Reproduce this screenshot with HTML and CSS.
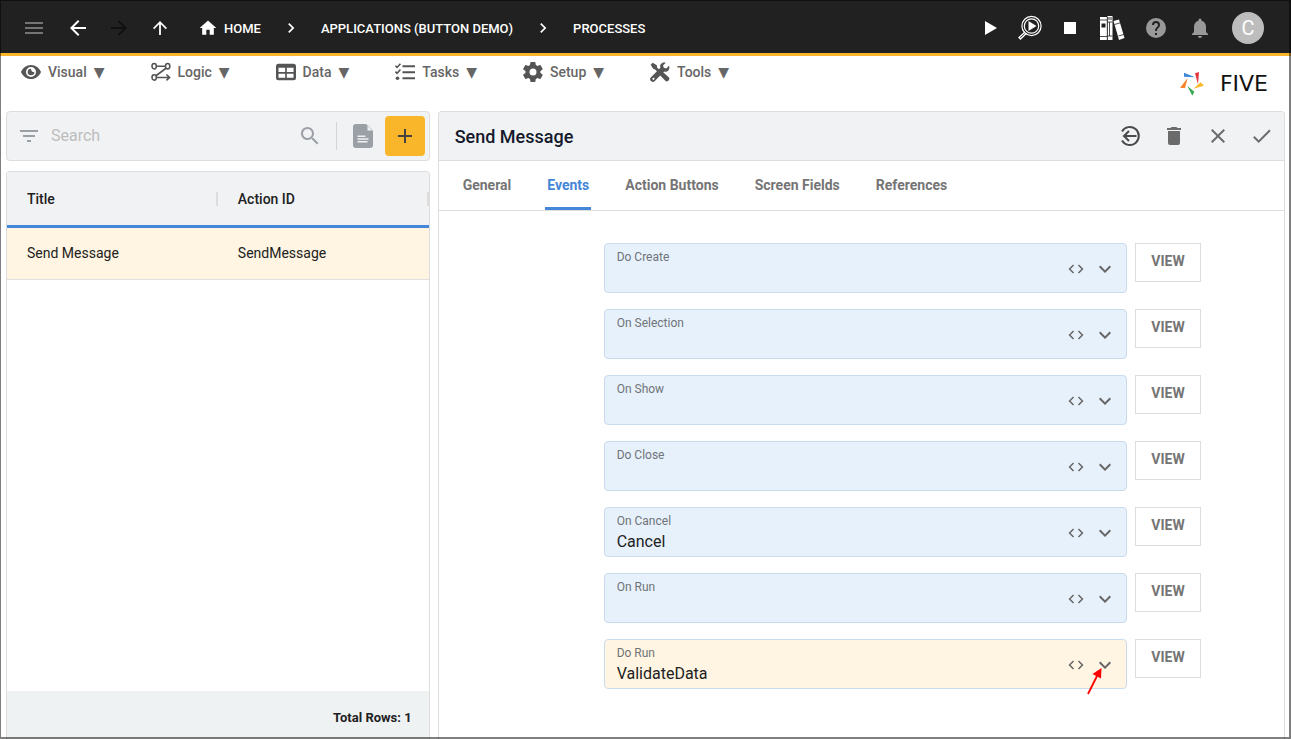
FILE: index.html
```html
<!DOCTYPE html>
<html lang="en">
  <head>
    <meta charset="UTF-8" />
    <meta name="viewport" content="width=device-width, initial-scale=1.0" />
    <title>Five - Processes</title>
    <link rel="stylesheet" href="styles.css" />
  </head>
  <body>
    <!-- shared icons -->
    <svg class="sprite" aria-hidden="true">
      <symbol id="chevron-right" viewBox="0 0 24 24"><path d="M8.6 16.6 13.2 12 8.6 7.4 10 6l6 6-6 6z" /></symbol>
      <symbol id="chevron-down" viewBox="0 0 24 24"><path d="M7.4 8.6 12 13.2l4.6-4.6L18 10l-6 6-6-6z" /></symbol>
      <symbol id="code" viewBox="0 0 24 24"><path d="M9.4 16.6 4.8 12l4.6-4.6L8 6l-6 6 6 6zm5.2 0 4.6-4.6-4.6-4.6L16 6l6 6-6 6z" /></symbol>
    </svg>

    <header class="topbar">
      <button class="icon-btn menu-toggle" aria-label="Menu">
        <svg viewBox="0 0 24 24"><path d="M3 18h18v-2H3zm0-5h18v-2H3zm0-7v2h18V6z" /></svg>
      </button>
      <div class="history">
        <button class="icon-btn" aria-label="Back">
          <svg viewBox="0 0 24 24"><path d="M20 11H7.8l5.6-5.6L12 4l-8 8 8 8 1.4-1.4L7.8 13H20z" /></svg>
        </button>
        <button class="icon-btn disabled" aria-label="Forward" disabled>
          <svg viewBox="0 0 24 24"><path d="m12 4-1.4 1.4 5.6 5.6H4v2h12.2l-5.6 5.6L12 20l8-8z" /></svg>
        </button>
        <button class="icon-btn" aria-label="Up">
          <svg viewBox="0 0 24 24"><path d="m5 12 1.2 1.2 4.9-4.9V19h1.8V8.300l4.900 4.900L19 12l-7-7z" /></svg>
        </button>
      </div>
      <nav class="breadcrumbs" aria-label="Breadcrumb">
        <a href="#" class="home">
          <svg viewBox="0 0 24 24" class="home-icon"><path d="M10 20v-6h4v6h5v-8h3L12 3 2 12h3v8z" /></svg>
          HOME
        </a>
        <svg class="crumb-sep"><use href="#chevron-right" /></svg>
        <a href="#">APPLICATIONS (BUTTON DEMO)</a>
        <svg class="crumb-sep"><use href="#chevron-right" /></svg>
        <a href="#">PROCESSES</a>
      </nav>
      <div class="run-tools">
        <button class="icon-btn" aria-label="Run">
          <svg viewBox="0 0 24 24"><path d="M7 5v14l12-7z" /></svg>
        </button>
        <button class="icon-btn" aria-label="Inspect">
          <svg viewBox="0 0 24 24">
            <g fill="none" stroke="currentColor">
              <circle cx="13.500" cy="10" r="9.600" stroke-width="1.200" />
              <circle cx="13.500" cy="10" r="7.200" stroke-width="1.200" />
              <path d="m7 16-6 5.500 1.500 1.500 6-5.800" stroke-width="1.300" />
            </g>
            <path d="M10.500 5v10l8-5z" />
          </svg>
        </button>
        <button class="icon-btn" aria-label="Stop">
          <svg viewBox="0 0 24 24"><path d="M6 6h12v12H6z" /></svg>
        </button>
      </div>
      <div class="user-tools">
        <button class="icon-btn" aria-label="Library">
          <svg viewBox="0 0 24 24">
            <path d="M0 1h7v23H0z" />
            <path d="M7.500 0h5v24h-5z" />
            <path d="m13.500 5 5.500-1.600L24.500 22 19 24z" />
            <path d="M7.500 1h5v3h-5z" fill="#999" />
            <path d="M1.500 7.500h4v4h-4z" fill="#212121" />
            <path d="M0 4h7M0 20.500h7M7.300 1v23M7.500 6h5M7.500 20h5M14.500 8.500l5.500-1.600M18.500 20l5.500-1.600M9.500 6v14" stroke="#212121" stroke-width=".8" />
          </svg>
        </button>
        <button class="icon-btn muted" aria-label="Help">
          <svg viewBox="0 0 24 24"><path d="M12 2a10 10 0 1 0 0 20 10 10 0 0 0 0-20zm1 17h-2v-2h2zm2.100-7.700-.9.900C13.400 12.900 13 13.500 13 15h-2v-.5c0-1.100.4-2.100 1.200-2.800l1.200-1.300c.4-.4.6-.9.6-1.400a2 2 0 0 0-4 0H8a4 4 0 0 1 8 0c0 .9-.4 1.700-.9 2.300z" /></svg>
        </button>
        <button class="icon-btn muted" aria-label="Notifications">
          <svg viewBox="0 0 24 24"><path d="M12 22a2 2 0 0 0 2-2h-4c0 1.100.9 2 2 2zm6-6v-5c0-3.100-1.600-5.600-4.500-6.300V4a1.500 1.500 0 0 0-3 0v.7C7.600 5.400 6 7.900 6 11v5l-2 2v1h16v-1z" /></svg>
        </button>
      </div>
      <button class="avatar" aria-label="Account">C</button>
    </header>

    <div class="menubar">
      <nav class="menus" aria-label="Main">
        <button class="menu">
          <svg viewBox="0 0 24 24"><path fill-rule="evenodd" d="M12 3.500C6.500 3.500 2 7 0 12c2 5 6.500 8.500 12 8.500S22 17 24 12c-2-5-6.500-8.500-12-8.500zm0 14.500a6 6 0 1 1 0-12 6 6 0 0 1 0 12z" /><path d="M12 8a4 4 0 1 0 4 4c-2 .5-4-1.500-4-4z" /></svg>
          Visual <span class="caret">▼</span>
        </button>
        <button class="menu">
          <svg viewBox="0 0 24 24">
            <g fill="none" stroke="currentColor" stroke-width="1.900">
              <ellipse cx="3.800" cy="5" rx="2.600" ry="3.200" />
              <ellipse cx="20" cy="5" rx="2.600" ry="3.200" />
              <ellipse cx="3.800" cy="18.500" rx="2.600" ry="3.200" />
              <path d="M6.500 5h11M18 7.500 6 16.500M6.500 18.500H22M18.500 15l3.800 3.500-3.800 3.500" />
            </g>
          </svg>
          Logic <span class="caret">▼</span>
        </button>
        <button class="menu">
          <svg viewBox="0 0 24 24"><path fill-rule="evenodd" d="M3 2h18a3 3 0 0 1 3 3v14a3 3 0 0 1-3 3H3a3 3 0 0 1-3-3V5a3 3 0 0 1 3-3zm0 5v5h8V7zm10 0v5h8V7zM3 14v5h8v-5zm10 0v5h8v-5z" /></svg>
          Data <span class="caret">▼</span>
        </button>
        <button class="menu">
          <svg viewBox="0 0 24 24">
            <path d="M9 4h15v2.200H9zm0 7.200h15v2.200H9zm0 7.200h15v2.200H9z" />
            <circle cx="3" cy="19.500" r="2.200" />
            <path d="m.5 4.500 2 2 4-4.500M.5 11.500l2 2 4-4.500" fill="none" stroke="currentColor" stroke-width="1.900" />
          </svg>
          Tasks <span class="caret">▼</span>
        </button>
        <button class="menu">
          <svg viewBox="2 2 20 20"><path d="M19.400 13c0-.3.100-.6.100-1s0-.7-.1-1l2.100-1.600c.2-.2.200-.4.100-.6l-2-3.500c-.1-.2-.4-.3-.6-.2l-2.500 1c-.5-.4-1.100-.7-1.700-1l-.4-2.600c0-.3-.2-.5-.5-.5h-4c-.3 0-.5.2-.5.500L9 5.100c-.6.300-1.200.6-1.700 1l-2.500-1c-.2-.1-.5 0-.6.200l-2 3.500c-.1.200 0 .4.100.6L4.500 11c0 .3-.1.600-.1 1s0 .7.100 1l-2.200 1.600c-.2.200-.2.400-.1.600l2 3.500c.1.200.4.300.6.200l2.500-1c.5.400 1.100.7 1.700 1l.4 2.600c0 .3.200.5.500.5h4c.3 0 .5-.2.500-.5l.4-2.600c.6-.3 1.200-.6 1.700-1l2.500 1c.2.100.5 0 .6-.2l2-3.500c.1-.2.100-.4-.1-.6zM12 15.500a3.500 3.500 0 1 1 0-7 3.500 3.500 0 0 1 0 7z" /></svg>
          Setup <span class="caret">▼</span>
        </button>
        <button class="menu">
          <svg viewBox="0 0 24 24">
            <path d="M.8 3.200 3.200.8l5 3.200.3 2.500 4 4-2.400 2.400-4-4L3.800 8z" />
            <path d="m13.500 13.500 2-1.500 7.300 6.700a3 3 0 0 1-4.100 4.100L12 16z" />
            <path fill-rule="evenodd" d="M22.800 4.500 19.500 7.800 16.500 7l-.8-3L19 .9c-4-1.500-8 2-6.500 6L1.200 18.200a3.200 3.200 0 0 0 4.600 4.600L17 11.500c4 1.300 7.500-2.700 5.800-7zM4.500 19a1.200 1.200 0 1 1-1.500 1.500A1.300 1.300 0 0 1 4.500 19z" />
          </svg>
          Tools <span class="caret">▼</span>
        </button>
      </nav>
      <a href="#" class="logo">
        <svg viewBox="0 0 72 72" aria-hidden="true">
          <path fill="#3d85d9" d="M12 2v12l33 2z" />
          <path fill="#e5343d" d="m45 4 12-4-3 37z" />
          <path fill="#f8842c" d="m0 47 23-29-8 31z" />
          <path fill="#fbb829" d="m40 50 22-19 10 10z" />
          <path fill="#37a853" d="m22 42 21 17-6 12z" />
        </svg>
        FIVE
      </a>
    </div>

    <main class="workspace">
      <section class="list">
        <form class="search">
          <svg viewBox="0 0 24 24" class="filter"><path d="M10 18h4v-2h-4zM3 6v2h18V6zm3 7h12v-2H6z" /></svg>
          <input type="search" class="search-input" placeholder="Search" aria-label="Search" />
          <button type="button" class="icon-btn" aria-label="Search">
            <svg viewBox="0 0 24 24"><path d="M15.500 14h-.8l-.3-.3A6.500 6.500 0 1 0 13.700 14.400l.3.300v.8l5 5 1.500-1.500zm-6 0a4.500 4.500 0 1 1 0-9 4.500 4.500 0 0 1 0 9z" /></svg>
          </button>
          <span class="divider"></span>
          <button type="button" class="icon-btn" aria-label="Report">
            <svg viewBox="0 0 24 24"><path fill-rule="evenodd" d="M5 0h10l7 7v14a3 3 0 0 1-3 3H5a3 3 0 0 1-3-3V3a3 3 0 0 1 3-3zm11.500 1v5.500H22zM6.500 11.500v1.500h8v-1.500zm0 2.800v1.500h11v-1.500zm0 2.800v1.500h10v-1.500z" /></svg>
          </button>
          <button type="button" class="add" aria-label="Add">
            <svg viewBox="0 0 24 24"><path d="M19 13h-6v6h-2v-6H5v-2h6V5h2v6h6z" /></svg>
          </button>
        </form>

        <div class="table-card">
          <table>
            <thead>
              <tr>
                <th><span>Title</span></th>
                <th><span>Action ID</span></th>
              </tr>
            </thead>
            <tbody>
              <tr class="selected">
                <td>Send Message</td>
                <td>SendMessage</td>
              </tr>
            </tbody>
          </table>
          <div class="table-footer">Total Rows: 1</div>
        </div>
      </section>

      <section class="detail">
        <div class="detail-header">
          <h1>Send Message</h1>
          <button class="icon-btn dark" aria-label="Go back">
            <svg viewBox="2 2 20 20"><g fill="none" stroke="currentColor" stroke-width="2"><path d="M4 7.500a9 9 0 1 1 0 9M18.500 12H6.500M11 7l-5 5 5 5" /></g></svg>
          </button>
          <button class="icon-btn" aria-label="Delete">
            <svg viewBox="0 0 24 24"><path d="M6 19a2 2 0 0 0 2 2h8a2 2 0 0 0 2-2V7H6zM19 4h-3.500l-1-1h-5l-1 1H5v2h14z" /></svg>
          </button>
          <button class="icon-btn" aria-label="Cancel">
            <svg viewBox="0 0 24 24"><path d="M19 6.400 17.600 5 12 10.600 6.400 5 5 6.400l5.600 5.600L5 17.600 6.400 19l5.600-5.600 5.600 5.600 1.400-1.400-5.600-5.600z" /></svg>
          </button>
          <button class="icon-btn" aria-label="Save">
            <svg viewBox="0 0 24 24"><path d="M8.700 16.200 4.500 12l-1.400 1.400 5.600 5.600 12-12-1.400-1.400z" /></svg>
          </button>
        </div>

        <div class="tabs" role="tablist">
          <button class="tab" role="tab">General</button>
          <button class="tab active" role="tab" aria-selected="true">Events</button>
          <button class="tab" role="tab">Action Buttons</button>
          <button class="tab" role="tab">Screen Fields</button>
          <button class="tab" role="tab">References</button>
        </div>

        <form class="events">
          <div class="event">
            <div class="field">
              <div class="field-text">
                <label for="do-create">Do Create</label>
                <input type="text" id="do-create" />
              </div>
              <button type="button" class="field-btn" aria-label="Edit code"><svg><use href="#code" /></svg></button>
              <button type="button" class="field-btn open" aria-label="Open list"><svg><use href="#chevron-down" /></svg></button>
            </div>
            <button type="button" class="view">VIEW</button>
          </div>
          <div class="event">
            <div class="field">
              <div class="field-text">
                <label for="on-selection">On Selection</label>
                <input type="text" id="on-selection" />
              </div>
              <button type="button" class="field-btn" aria-label="Edit code"><svg><use href="#code" /></svg></button>
              <button type="button" class="field-btn open" aria-label="Open list"><svg><use href="#chevron-down" /></svg></button>
            </div>
            <button type="button" class="view">VIEW</button>
          </div>
          <div class="event">
            <div class="field">
              <div class="field-text">
                <label for="on-show">On Show</label>
                <input type="text" id="on-show" />
              </div>
              <button type="button" class="field-btn" aria-label="Edit code"><svg><use href="#code" /></svg></button>
              <button type="button" class="field-btn open" aria-label="Open list"><svg><use href="#chevron-down" /></svg></button>
            </div>
            <button type="button" class="view">VIEW</button>
          </div>
          <div class="event">
            <div class="field">
              <div class="field-text">
                <label for="do-close">Do Close</label>
                <input type="text" id="do-close" />
              </div>
              <button type="button" class="field-btn" aria-label="Edit code"><svg><use href="#code" /></svg></button>
              <button type="button" class="field-btn open" aria-label="Open list"><svg><use href="#chevron-down" /></svg></button>
            </div>
            <button type="button" class="view">VIEW</button>
          </div>
          <div class="event">
            <div class="field">
              <div class="field-text">
                <label for="on-cancel">On Cancel</label>
                <input type="text" id="on-cancel" value="Cancel" />
              </div>
              <button type="button" class="field-btn" aria-label="Edit code"><svg><use href="#code" /></svg></button>
              <button type="button" class="field-btn open" aria-label="Open list"><svg><use href="#chevron-down" /></svg></button>
            </div>
            <button type="button" class="view">VIEW</button>
          </div>
          <div class="event">
            <div class="field">
              <div class="field-text">
                <label for="on-run">On Run</label>
                <input type="text" id="on-run" />
              </div>
              <button type="button" class="field-btn" aria-label="Edit code"><svg><use href="#code" /></svg></button>
              <button type="button" class="field-btn open" aria-label="Open list"><svg><use href="#chevron-down" /></svg></button>
            </div>
            <button type="button" class="view">VIEW</button>
          </div>
          <div class="event">
            <div class="field changed">
              <div class="field-text">
                <label for="do-run">Do Run</label>
                <input type="text" id="do-run" value="ValidateData" />
              </div>
              <button type="button" class="field-btn" aria-label="Edit code"><svg><use href="#code" /></svg></button>
              <button type="button" class="field-btn open" aria-label="Open list"><svg><use href="#chevron-down" /></svg></button>
              <svg class="pointer" viewBox="0 0 16 28" aria-hidden="true">
                <path d="M1 27 11 7" stroke="#f00" stroke-width="1.800" />
                <path d="m14.500 1-9 6 8.500 4.500z" fill="#f00" />
              </svg>
            </div>
            <button type="button" class="view">VIEW</button>
          </div>
        </form>
      </section>
    </main>
  </body>
</html>
```
FILE: styles.css
```css
* {
  box-sizing: border-box;
}

body {
  display: flex;
  flex-direction: column;
  min-height: 100vh;
  margin: 0;
  background: #fff;
  color: #212121;
  font-family: Roboto, "Liberation Sans", sans-serif;
  font-size: 14px;
}

/* window frame */
body::after {
  content: "";
  position: fixed;
  inset: 0;
  border: solid rgba(0, 0, 0, 0.5);
  border-width: 1px 2px 2px 1px;
  pointer-events: none;
}

button,
input {
  font-family: inherit;
  font-size: inherit;
  color: inherit;
}

button {
  padding: 0;
  border: none;
  background: none;
  cursor: pointer;
}

a {
  color: inherit;
  text-decoration: none;
}

svg {
  display: block;
  flex: none;
  fill: currentColor;
  overflow: visible;
}

.sprite {
  display: none;
}

.icon-btn,
.icon-btn svg {
  width: 24px;
  height: 24px;
}

.icon-btn {
  flex: none;
}

/* top bar */
.topbar {
  display: flex;
  align-items: center;
  height: 56px;
  padding: 3px 27px 0 22px;
  border-bottom: 3px solid #f9b62a;
  background: #212121;
  color: #fff;
}

.menu-toggle {
  margin-right: 20px;
  color: #757575;
}

.history {
  display: flex;
  gap: 17px;
  margin-right: 26px;
}

.icon-btn.disabled {
  color: #111;
}

.breadcrumbs {
  display: flex;
  align-items: center;
  gap: 18px;
  font-size: 13px;
  font-weight: 500;
}

.home {
  display: flex;
  align-items: center;
  gap: 6px;
}

.home-icon {
  width: 20px;
  height: 20px;
}

.crumb-sep {
  width: 24px;
  height: 20px;
}

.run-tools {
  display: flex;
  gap: 16px;
  margin-left: auto;
  margin-right: 18px;
}

.user-tools {
  display: flex;
  gap: 20px;
  margin-right: 20px;
}

.icon-btn.muted {
  color: #999;
}

.avatar {
  width: 32px;
  height: 32px;
  border-radius: 50%;
  background: #bdbdbd;
  color: #fff;
  font-size: 20px;
}

/* menu bar */
.menubar {
  display: flex;
  justify-content: space-between;
  align-items: flex-start;
  height: 55px;
  padding: 0 23px 0 21px;
}

.menus {
  display: flex;
  gap: 46px;
}

.menu {
  display: flex;
  align-items: center;
  gap: 7px;
  height: 32px;
  color: #666;
  font-weight: 500;
}

.menu svg {
  width: 20px;
  height: 20px;
  color: #555;
}

.caret {
  font-family: "DejaVu Sans", sans-serif;
}

.logo {
  display: flex;
  align-items: center;
  align-self: center;
  gap: 16px;
  color: #111;
  font-family: "DejaVu Sans", sans-serif;
  font-size: 22px;
  line-height: 24px;
}

.logo svg {
  width: 24px;
  height: 24px;
}

/* workspace */
.workspace {
  display: grid;
  grid-template-columns: 1fr 2fr;
  flex: 1;
  gap: 8px;
  padding: 0 6px;
}

.list {
  display: flex;
  flex-direction: column;
  gap: 10px;
}

.search {
  display: flex;
  align-items: center;
  height: 50px;
  padding: 0 4px 0 10px;
  border: 1px solid #ddd;
  border-radius: 4px;
  background: #f1f2f4;
  color: #9aa0a6;
}

.filter {
  width: 24px;
  height: 24px;
}

.search-input {
  flex: 1;
  min-width: 0;
  padding: 0 10px 2px;
  border: none;
  outline: none;
  background: none;
  color: #212121;
  font-size: 16px;
}

.search-input::placeholder {
  color: #bdbdbd;
}

.divider {
  width: 1px;
  height: 28px;
  margin: 0 14px;
  background: #d5d5d5;
}

.add {
  display: flex;
  align-items: center;
  justify-content: center;
  width: 40px;
  height: 40px;
  margin-left: 10px;
  border-radius: 4px;
  background: #f9b62a;
  color: #444;
}

.add svg {
  width: 24px;
  height: 24px;
}

.table-card {
  display: flex;
  flex-direction: column;
  flex: 1;
  border: solid #ddd;
  border-width: 1px 1px 0;
  border-radius: 4px 4px 0 0;
  overflow: hidden;
}

table {
  width: 100%;
  border-spacing: 0;
  table-layout: fixed;
  text-align: left;
}

th {
  height: 56px;
  padding: 0 0 0 20px;
  border-bottom: 3px solid #4486d8;
  background: #f1f2f4;
  font-weight: 500;
}

th span {
  display: block;
  border-right: 2px solid #ddd;
  line-height: 14px;
}

td {
  height: 52px;
  padding: 0 0 2px 20px;
  border-bottom: 1px solid #e0e0e0;
}

.selected {
  background: #fff5e2;
}

.table-footer {
  margin-top: auto;
  padding: 19px 17px 13px;
  background: #eef2f3;
  font-size: 13px;
  font-weight: 700;
  line-height: 16px;
  text-align: right;
}

/* detail panel */
.detail {
  border: solid #ddd;
  border-width: 1px 1px 0;
  border-radius: 4px 4px 0 0;
  overflow: hidden;
}

.detail-header {
  display: flex;
  align-items: center;
  gap: 20px;
  height: 49px;
  padding: 0 10px 0 16px;
  border-bottom: 1px solid #ddd;
  background: #f1f2f4;
  color: #6b6b6b;
}

.detail-header h1 {
  flex: 1;
  margin: 0;
  color: #14192b;
  font-size: 18px;
  font-weight: 500;
}

.icon-btn.dark {
  color: #4a4a4a;
}

.icon-btn.dark svg {
  width: 20px;
  height: 20px;
  margin: 2px;
}

.tabs {
  display: flex;
  gap: 32px;
  height: 50px;
  padding: 0 22px;
  border-bottom: 1px solid #ddd;
}

.tab {
  padding: 0 2px 2px;
  border-top: 3px solid transparent;
  border-bottom: 3px solid transparent;
  color: #757575;
  font-weight: 700;
}

.tab.active {
  border-bottom-color: #4486d8;
  color: #4486d8;
}

.events {
  display: flex;
  flex-direction: column;
  gap: 16px;
  padding: 32px 83px 32px 165px;
}

.event {
  display: flex;
  align-items: flex-start;
  gap: 8px;
}

.field {
  position: relative;
  display: flex;
  flex: 1;
  align-items: center;
  height: 50px;
  padding: 0 9px 0 12px;
  border: 1px solid #c9dbec;
  border-radius: 4px;
  background: #e7f1fc;
}

.field.changed {
  background: #fff5e2;
}

.field-text {
  display: flex;
  flex: 1;
  flex-direction: column;
  padding-top: 2px;
}

.field-text label {
  color: #6f7478;
  font-size: 12px;
  line-height: 16px;
}

.field-text input {
  height: 24px;
  padding: 0;
  border: none;
  outline: none;
  background: none;
  font-size: 16px;
}

.field-btn {
  padding: 2px 0 0;
  color: #666;
}

.field-btn svg {
  width: 18px;
  height: 18px;
}

.field-btn.open {
  margin-left: 8px;
}

.field-btn.open svg {
  width: 24px;
  height: 24px;
}

/* arrow drawn over the drop-down of the last field */
.pointer {
  position: absolute;
  right: 23px;
  bottom: -7px;
  width: 16px;
  height: 28px;
}

.view {
  width: 66px;
  height: 39px;
  padding-bottom: 3px;
  border: 1px solid #ddd;
  color: #757575;
  font-weight: 700;
}
```
